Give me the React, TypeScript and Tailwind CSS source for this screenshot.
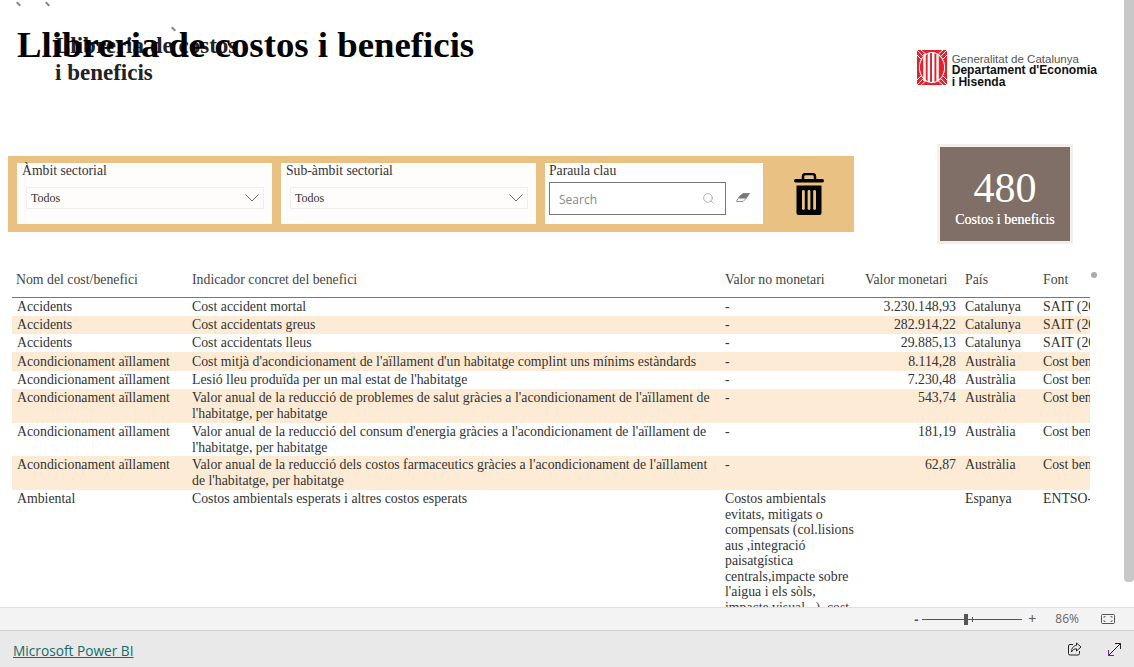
import React from "react";
import { Search } from "lucide-react";

const serif = "font-['Liberation_Serif','Times_New_Roman',serif]";

type Row = { a: string; b: React.ReactNode; c: React.ReactNode; d: string; e: string; f: string; h: string; pt: string };

const rows: Row[] = [
  { a: "Accidents", b: "Cost accident mortal", c: "-", d: "3.230.148,93", e: "Catalunya", f: "SAIT (2018)", h: "h-[18px]", pt: "pt-[1px]" },
  { a: "Accidents", b: "Cost accidentats greus", c: "-", d: "282.914,22", e: "Catalunya", f: "SAIT (2018)", h: "h-[18px]", pt: "pt-[1px]" },
  { a: "Accidents", b: "Cost accidentats lleus", c: "-", d: "29.885,13", e: "Catalunya", f: "SAIT (2018)", h: "h-[18px]", pt: "pt-[1px]" },
  { a: "Acondicionament aïllament", b: "Cost mitjà d'acondicionament de l'aïllament d'un habitatge complint uns mínims estàndards", c: "-", d: "8.114,28", e: "Austràlia", f: "Cost beneficis", h: "h-[19px]", pt: "pt-[2px]" },
  { a: "Acondicionament aïllament", b: "Lesió lleu produïda per un mal estat de l'habitatge", c: "-", d: "7.230,48", e: "Austràlia", f: "Cost beneficis", h: "h-[18px]", pt: "pt-[1px]" },
  { a: "Acondicionament aïllament", b: "Valor anual de la reducció de problemes de salut gràcies a l'acondicionament de l'aïllament de l'habitatge, per habitatge", c: "-", d: "543,74", e: "Austràlia", f: "Cost beneficis", h: "h-[34px]", pt: "pt-[1px]" },
  { a: "Acondicionament aïllament", b: "Valor anual de la reducció del consum d'energia gràcies a l'acondicionament de l'aïllament de l'habitatge, per habitatge", c: "-", d: "181,19", e: "Austràlia", f: "Cost beneficis", h: "h-[33px]", pt: "pt-[1px]" },
  { a: "Acondicionament aïllament", b: "Valor anual de la reducció dels costos farmaceutics gràcies a l'acondicionament de l'aïllament de l'habitatge, per habitatge", c: "-", d: "62,87", e: "Austràlia", f: "Cost beneficis", h: "h-[34px]", pt: "pt-[1px]" },
  { a: "Ambiental", b: "Costos ambientals esperats i altres costos esperats", c: "Costos ambientals evitats, mitigats o compensats (col.lisions aus ,integració paisatgística centrals,impacte sobre l'aigua i els sòls, impacte visual...), cost", d: "", e: "Espanya", f: "ENTSO-E", h: "h-[140px]", pt: "pt-[1px]" },
];

const grid = "grid grid-cols-[175px_534px_139px_101px_78px_51px]";

function Dropdown({ label }: { label: string }) {
  return (
    <div className="w-[255px] h-[61px] bg-[#fffdfb] px-[5px] flex flex-col">
      <div className="text-[13.700px] leading-[15px] text-[#333]">{label}</div>
      <div className="ml-[4px] mt-[9px] w-[238px] h-[22px] border border-[#f0efed] flex items-center justify-between pl-[4px] pr-[4px]">
        <span className="text-[12px] text-[#333]">Todos</span>
        <svg width="14" height="8" viewBox="0 0 14 8" fill="none" stroke="#555" strokeWidth="0.900">
          <path d="M0.500 0.500L7 7L13.500 0.500" />
        </svg>
      </div>
    </div>
  );
}

function Logo() {
  return (
    <div className="flex items-start gap-[5px]">
      <svg width="30" height="35" viewBox="0 0 31 35" preserveAspectRatio="none">
        <rect x="0" y="0" width="31" height="35" fill="#e2232e" />
        <path d="M0 0L6 6M4 0L9 4M0 5L4 9M31 0L25 6M27 0L22 4M31 5L27 9M0 35L6 29M4 35L9 31M0 30L4 26M31 35L25 29M27 35L22 31M31 30L27 26" stroke="#fff" strokeWidth="1" />
        <ellipse cx="15.500" cy="17.500" rx="13.500" ry="15.500" fill="#fff" />
        <ellipse cx="15.500" cy="17.500" rx="12.500" ry="14.500" fill="#e2232e" />
        <rect x="6.500" y="4" width="2.500" height="27" fill="#fff" />
        <rect x="11" y="3" width="2.500" height="29" fill="#fff" />
        <rect x="15.500" y="3" width="2.500" height="29" fill="#fff" />
        <rect x="20" y="4" width="2.500" height="27" fill="#fff" />
      </svg>
      <div className="font-['Liberation_Sans',Arial,sans-serif] text-[12.100px] leading-[11.500px] text-[#111] pt-[3px]">
        <div className="text-[#555] text-[11.500px] leading-[12px]">Generalitat de Catalunya</div>
        <div className="font-bold">Departament d'Economia</div>
        <div className="font-bold">i Hisenda</div>
      </div>
    </div>
  );
}

function Trash() {
  return (
    <svg width="30" height="42" viewBox="0 0 30 42" fill="#000">
      <path d="M9 6V3.500C9 2 10 1 11.500 1H18.500C20 1 21 2 21 3.500V6" fill="none" stroke="#000" strokeWidth="2.500" />
      <rect x="0" y="6" width="30" height="3.500" rx="1.700" />
      <path d="M2.500 12.500H27.500V40C27.500 41 26.500 42 25.500 42H4.500C3.500 42 2.500 41 2.500 40Z" />
      <rect x="8" y="17" width="2.800" height="20" rx="1.400" fill="#e9c283" />
      <rect x="13.600" y="17" width="2.800" height="20" rx="1.400" fill="#e9c283" />
      <rect x="19.200" y="17" width="2.800" height="20" rx="1.400" fill="#e9c283" />
    </svg>
  );
}

function Eraser() {
  return (
    <svg width="14" height="9" viewBox="0 0 14 9">
      <path d="M0.500 8.500L3 3.800L7 0.500H13.500L10 5.500L7 8.500Z" fill="#fff" stroke="#777" strokeWidth="0.800" />
      <path d="M7 0.500H13.500L10 5.500H3.200L3 3.800Z" fill="#777" />
    </svg>
  );
}

export default function App() {
  return (
    <div className={`w-[1134px] h-[667px] overflow-hidden flex flex-col bg-white ${serif}`}>
      <main className="h-[607px] flex relative overflow-hidden">
        <div className="w-[1124px] shrink-0">
          <header className="h-[144px] flex justify-end items-start pt-[50px] pr-[27px]">
            <Logo />
          </header>

          <section className="h-[100px] flex items-start">
            <div className="ml-[8px] mt-[12px] w-[846px] h-[76px] bg-[#e9c283] flex items-start gap-[9px] pl-[9px] pt-[7px]">
              <Dropdown label="Àmbit sectorial" />
              <Dropdown label="Sub-àmbit sectorial" />
              <div className="w-[218px] h-[61px] bg-white pl-[4px] flex flex-col">
                <div className="text-[13.700px] leading-[15px] text-[#333]">Paraula clau</div>
                <div className="flex items-center mt-[4px]">
                  <div className="w-[177px] h-[33px] border border-[#777] flex items-center justify-between pl-[9px] pr-[10px]">
                    <span className="font-['Open_Sans',sans-serif] text-[12px] text-[#888] pt-[2px]">Search</span>
                    <Search size={13} strokeWidth={1} className="text-[#777]" />
                  </div>
                  <span className="ml-[10px] -mt-[3px]"><Eraser /></span>
                </div>
              </div>
              <div className="ml-[22px] mt-[10px]"><Trash /></div>
            </div>
            <div className="ml-[83px] w-[136px] h-[100px] bg-[#7f6f66] border-[3px] border-[#f3f0ec] flex flex-col items-center text-white">
              <div className="text-[42px] leading-[46px] mt-[18px]">480</div>
              <div className="text-[14px] leading-[16px] mt-[1px] [text-shadow:0_0_0.4px_#fff]">Costos i beneficis</div>
            </div>
          </section>

          <section className="ml-[12px] mt-[26px] w-[1078px] overflow-hidden text-[13.800px] leading-[15.500px] text-[#333]">
            <div className={`${grid} h-[28px] border-b border-[#777] text-[#444]`}>
              <div className="pl-[4px] pt-[2px]">Nom del cost/benefici</div>
              <div className="pl-[5px] pt-[2px]">Indicador concret del benefici</div>
              <div className="pl-[4px] pt-[2px]">Valor no monetari</div>
              <div className="pl-[5px] pt-[2px]">Valor monetari</div>
              <div className="pl-[4px] pt-[2px]">País</div>
              <div className="pl-[4px] pt-[2px]">Font</div>
            </div>
            {rows.map((r, i) => (
              <div key={i} className={`${grid} ${r.h} ${i % 2 === 1 ? "bg-[#fdebd5]" : "bg-white"} overflow-hidden`}>
                <div className={`pl-[5px] ${r.pt}`}>{r.a}</div>
                <div className={`pl-[5px] pr-[5px] ${r.pt}`}>{r.b}</div>
                <div className={`pl-[4px] pr-[4px] ${r.pt}`}>{r.c}</div>
                <div className={`pr-[5px] text-right ${r.pt}`}>{r.d}</div>
                <div className={`pl-[4px] ${r.pt}`}>{r.e}</div>
                <div className={`pl-[4px] whitespace-nowrap overflow-hidden ${r.pt}`}>{r.f}</div>
              </div>
            ))}
          </section>
        </div>

        <div className="w-[10px] h-[582px] rounded-b-[4px] bg-[#c8c8c8]" />

        {/* Overlapping titles and stray marks of the report */}
        <h2 className="absolute left-[55px] top-[32px] text-[23px] leading-[27px] font-bold text-[#222] w-[190px]">
          Llibreria de costos i beneficis
        </h2>
        <h1 className="absolute left-[17px] top-[24px] text-[36.800px] leading-[42px] font-bold text-black whitespace-nowrap">
          Llibreria de costos i beneficis
        </h1>
        <span className="absolute left-[16px] top-[3px] w-[5px] h-[2px] rotate-45 bg-[#888]" />
        <span className="absolute left-[45px] top-[3px] w-[5px] h-[2px] rotate-45 bg-[#888]" />
        <span className="absolute left-[171px] top-[28px] w-[5px] h-[2px] rotate-45 bg-[#888]" />
        <span className="absolute left-[1091px] top-[272px] w-[6px] h-[6px] rounded-full bg-[#aaa]" />
      </main>

      <div className="h-[23px] bg-[#f3f3f3] border-t border-[#e0e0e0] flex items-center justify-end font-['Open_Sans',sans-serif] text-[#555]">
        <span className="text-[13px] font-bold mr-[4px] leading-none">-</span>
        <div className="relative w-[100px] h-[1px] bg-[#555] mr-[6px]">
          <span className="absolute left-[42px] -top-[5px] w-[4px] h-[11px] bg-[#555]" />
          <span className="absolute left-[50px] -top-[2px] w-[1px] h-[5px] bg-[#555]" />
        </div>
        <span className="text-[14px] leading-none mr-[19px]">+</span>
        <span className="text-[12px] text-[#666] mr-[22px]">86%</span>
        <svg width="14" height="10" viewBox="0 0 14 10" className="mr-[19px]" fill="none" stroke="#555" strokeWidth="1">
          <rect x="0.500" y="0.500" width="13" height="9" rx="1" />
          <path d="M3 4V2.500H4.500M11 4V2.500H9.500M3 6V7.500H4.500M11 6V7.500H9.500" stroke="#777" />
        </svg>
      </div>

      <footer className="h-[37px] bg-[#e9e9e9] border-t border-[#cfcfcf] flex items-center justify-between pl-[13px] font-['Open_Sans',sans-serif]">
        <a className="text-[13.700px] text-[#146c6c] underline pt-[5px]">Microsoft Power BI</a>
        <div className="flex items-center mr-[13px] gap-[26px]">
          <svg width="14" height="14" viewBox="0 0 14 14" fill="none" stroke="#222" strokeWidth="1">
            <path d="M5 2.500H2A1.500 1.500 0 0 0 0.500 4V11.500A1.500 1.500 0 0 0 2 13H10A1.500 1.500 0 0 0 11.500 11.500V9" />
            <path d="M8.500 1L13 5L8.500 9V6.800C6 6.800 4.500 8 3.500 10C3.500 6.500 5.500 3.500 8.500 3.300Z" />
          </svg>
          <svg width="13" height="13" viewBox="0 0 13 13" fill="none" strokeWidth="1">
            <path d="M12.500 0.500L0.500 12.500" stroke="#222" />
            <path d="M7 0.500H12.500V6" stroke="#222" />
            <path d="M0.500 7V12.500H6" stroke="#7a1fa2" />
          </svg>
        </div>
      </footer>
    </div>
  );
}
